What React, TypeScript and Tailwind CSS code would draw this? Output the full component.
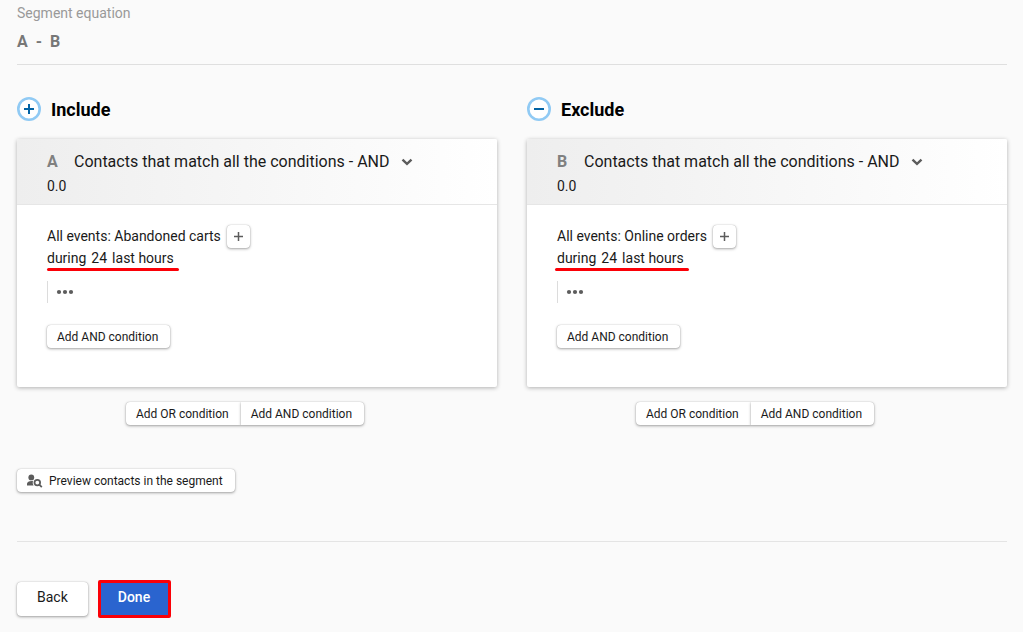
import type { ReactNode } from "react";

interface Segment {
  title: string;
  mode: "include" | "exclude";
  letter: string;
  events: string;
}

const segments: Segment[] = [
  { title: "Include", mode: "include", letter: "A", events: "All events: Abandoned carts" },
  { title: "Exclude", mode: "exclude", letter: "B", events: "All events: Online orders" },
];

const shadow = "shadow-[0_1px_3px_rgba(0,0,0,0.35),0_0_1px_rgba(0,0,0,0.3)]";

function SmallButton({ children, className = "rounded" }: { children: ReactNode; className?: string }) {
  return (
    <button
      type="button"
      className={`inline-flex h-[23px] items-center bg-white pr-3 pl-2.5 text-xs whitespace-nowrap ${shadow} ${className}`}
    >
      {children}
    </button>
  );
}

function ModeIcon({ mode }: { mode: Segment["mode"] }) {
  return (
    <svg viewBox="0 0 24 24" className="size-6" aria-hidden="true">
      <circle cx="12" cy="12" r="10.7" fill="#fff" stroke="#90caf4" strokeWidth="2.6" />
      <path d="M7 12h10" stroke="#0263a5" strokeWidth="2" />
      {mode === "include" && <path d="M12 7v10" stroke="#0263a5" strokeWidth="2" />}
    </svg>
  );
}

function PersonSearchIcon() {
  return (
    <svg viewBox="0 0 16 14" className="mr-1.5 h-3.5 w-4" fill="#5c5c5c" aria-hidden="true">
      <circle cx="4.3" cy="3.4" r="2.9" />
      <path d="M0 11.6V9.800c0-1.800 1.900-2.900 4.700-2.900.5 0 .9 0 1.300.1-.5 1.600-.3 3.300.6 4.600z" />
      <circle cx="10.300" cy="8.600" r="2.800" fill="none" stroke="#5c5c5c" strokeWidth="1.800" />
      <path d="m12.300 10.600 2.500 2.500" stroke="#5c5c5c" strokeWidth="1.800" />
    </svg>
  );
}

function SegmentColumn({ segment }: { segment: Segment }) {
  const include = segment.mode === "include";

  return (
    <section className="min-w-0 flex-1">
      <div className="flex items-start gap-2.5">
        <ModeIcon mode={segment.mode} />
        <h2 className="text-lg leading-[26px] font-bold text-black">{segment.title}</h2>
      </div>

      <div className="mt-4 rounded-xs bg-white shadow-[0_1px_4px_rgba(0,0,0,0.3)]">
        <div className="rounded-t-xs border-b border-[#e6e6e6] bg-linear-to-r from-[#eeeeee] to-white px-[30px] pt-[11px] pb-1.5">
          <div className="flex items-center text-base leading-6">
            <span className="w-[27px] font-bold text-[#808080]">{segment.letter}</span>
            <button type="button" className="flex items-center gap-3">
              Contacts that match all the conditions - AND
              <svg viewBox="0 0 12 8" className="h-2 w-3" fill="none" aria-hidden="true">
                <path d="M1.5 1.7 6 5.8l4.5-4.1" stroke="#5c5c5c" strokeWidth="2.4" />
              </svg>
            </button>
          </div>
          <p className="text-sm leading-6">0.0</p>
        </div>

        <div className="px-[30px] pt-[19px] pb-[39px]">
          <div className="flex items-end gap-1.5 text-sm leading-6">
            <span>{segment.events}</span>
            <button
              type="button"
              aria-label="Add filter"
              className={`flex size-[23px] items-center justify-center rounded bg-white ${shadow}`}
            >
              <svg viewBox="0 0 9 9" className="size-[9px]" aria-hidden="true">
                <path d="M4.5 0v9M0 4.5h9" stroke="#5c5c5c" strokeWidth="1.5" />
              </svg>
            </button>
          </div>
          <p className="relative flex w-fit gap-[5px] text-sm leading-5">
            <span>during</span>
            <span>24</span>
            <span>last hours</span>
            <span
              className={`absolute top-5 -right-[5px] h-[3px] rounded-full bg-[#fb0007] ${include ? "left-0" : "-left-0.5"}`}
            />
          </p>
          <div className="mt-[13px] flex h-[22px] items-center border-l border-[#dcdcdc] pl-2">
            <button type="button" aria-label="More options">
              <svg viewBox="0 0 18 6" className="h-1.5 w-[18px]" fill="#5c5c5c" aria-hidden="true">
                <circle cx="3" cy="3" r="2.1" />
                <circle cx="9" cy="3" r="2.1" />
                <circle cx="15" cy="3" r="2.1" />
              </svg>
            </button>
          </div>
          <div className="mt-[22px] flex">
            <SmallButton>Add AND condition</SmallButton>
          </div>
        </div>
      </div>

      <div className="mt-[15px] flex justify-center pr-6">
        <SmallButton className="rounded-l">Add OR condition</SmallButton>
        <SmallButton className="rounded-r">Add AND condition</SmallButton>
      </div>
    </section>
  );
}

export default function App() {
  return (
    <main className="min-h-screen bg-[#fafafa] pt-[3px] pr-4 pb-3 pl-[17px] font-['Roboto',sans-serif] text-[#1a1a1a]">
      <header className="border-b border-[#dfdfdf] pb-2.5">
        <p className="text-sm leading-5 text-[#999999]">Segment equation</p>
        <p className="mt-[7px] flex gap-2 text-base leading-6 font-bold text-[#777777]">
          <span>A</span>
          <span>-</span>
          <span>B</span>
        </p>
      </header>

      <div className="mt-8 flex gap-[30px]">
        {segments.map((segment) => (
          <SegmentColumn key={segment.letter} segment={segment} />
        ))}
      </div>

      <div className="mt-11 flex">
        <SmallButton>
          <PersonSearchIcon />
          Preview contacts in the segment
        </SmallButton>
      </div>

      <footer className="mt-[49px] flex items-center gap-2.5 border-t border-[#e4e4e4] pt-[38px]">
        <button type="button" className={`h-[34px] rounded bg-white px-5 pb-1 text-sm ${shadow}`}>
          Back
        </button>
        <button
          type="button"
          className="h-[38px] rounded-xs border-3 border-[#fb0007] bg-[#2a64cf] pr-[18px] pb-1 pl-[17px] text-sm font-medium text-white"
        >
          Done
        </button>
      </footer>
    </main>
  );
}
